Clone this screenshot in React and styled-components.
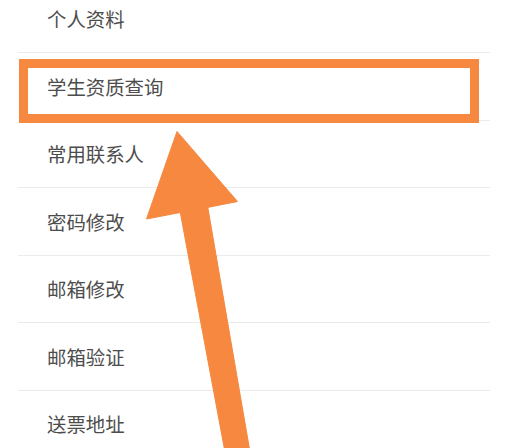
import React from "react";
import styled, { createGlobalStyle } from "styled-components";

const ORANGE = "#f6883f";

const Global = createGlobalStyle`
  html, body {
    margin: 0;
    padding: 0;
    background: #ffffff;
    overflow: hidden;
  }
  body {
    font-family: "Noto Sans CJK SC", "Noto Sans", sans-serif;
  }
`;

const Screen = styled.div`
  position: relative;
  width: 518px;
  height: 448px;
  overflow: hidden;
  background: #ffffff;
`;

const List = styled.ul`
  list-style: none;
  margin: -14.5px 0 0 0;
  padding: 0 28px 0 18px;
`;

const Row = styled.li`
  box-sizing: border-box;
  height: 67.5px;
  display: flex;
  align-items: center;
  padding-left: 29px;
  border-bottom: 1px solid #ebebeb;
  font-size: 19.4px;
  color: #4d4d4d;
  letter-spacing: 0;
`;

const Highlight = styled.div`
  position: absolute;
  left: 19px;
  top: 59px;
  width: 460px;
  height: 64px;
  box-sizing: border-box;
  border: 9px solid ${ORANGE};
  pointer-events: none;
`;

const Overlay = styled.svg`
  position: absolute;
  left: 0;
  top: 0;
  pointer-events: none;
`;

const items = [
  "个人资料",
  "学生资质查询",
  "常用联系人",
  "密码修改",
  "邮箱修改",
  "邮箱验证",
  "送票地址",
];

export default function App() {
  return (
    <>
      <Global />
      <Screen>
        <List>
          {items.map((t) => (
            <Row key={t}>{t}</Row>
          ))}
        </List>
        <Highlight />
        <Overlay width="518" height="448" viewBox="0 0 518 448">
          <polygon
            points="177,131.5 237.5,201.5 207.8,207.4 250,452 225,452 180.3,212.5 146.5,219"
            fill={ORANGE}
            stroke={ORANGE}
            strokeWidth="1"
            strokeLinejoin="miter"
          />
        </Overlay>
      </Screen>
    </>
  );
}
